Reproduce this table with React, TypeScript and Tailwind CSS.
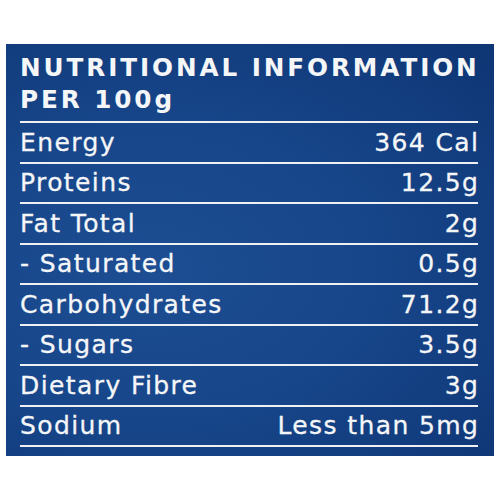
import React from "react";

const rows: [string, string][] = [
  ["Energy", "364 Cal"],
  ["Proteins", "12.5g"],
  ["Fat Total", "2g"],
  ["- Saturated", "0.5g"],
  ["Carbohydrates", "71.2g"],
  ["- Sugars", "3.5g"],
  ["Dietary Fibre", "3g"],
  ["Sodium", "Less than 5mg"],
];

export default function App() {
  return (
    <div className="w-[500px] h-[500px] bg-white pt-[44px] pl-[6px]">
      <div
        className="w-[488px] h-[412px] pl-[14px] pr-[16px] pt-[8px] text-[#f5f6f8] bg-[radial-gradient(ellipse_at_30%_55%,#1d4d92_0%,#17468a_45%,#0e3574_100%)]"
        style={{ fontFamily: '"DejaVu Sans", sans-serif' }}
      >
        <div className="text-[24.7px] font-bold leading-[32px] tracking-[2.9px] h-[69px] whitespace-nowrap">
          <div>NUTRITIONAL INFORMATION</div>
          <div>PER 100g</div>
        </div>
        <div className="border-t-2 border-[#eef0f4]">
          {rows.map(([k, v]) => (
            <div
              key={k}
              className="flex justify-between items-center h-[40.5px] border-b-2 border-[#eef0f4] text-[25px] tracking-[1.4px] leading-none [-webkit-text-stroke:0.3px_#f5f6f8]"
            >
              <span>{k}</span>
              <span className="mr-[-1.4px]">{v}</span>
            </div>
          ))}
        </div>
      </div>
    </div>
  );
}
